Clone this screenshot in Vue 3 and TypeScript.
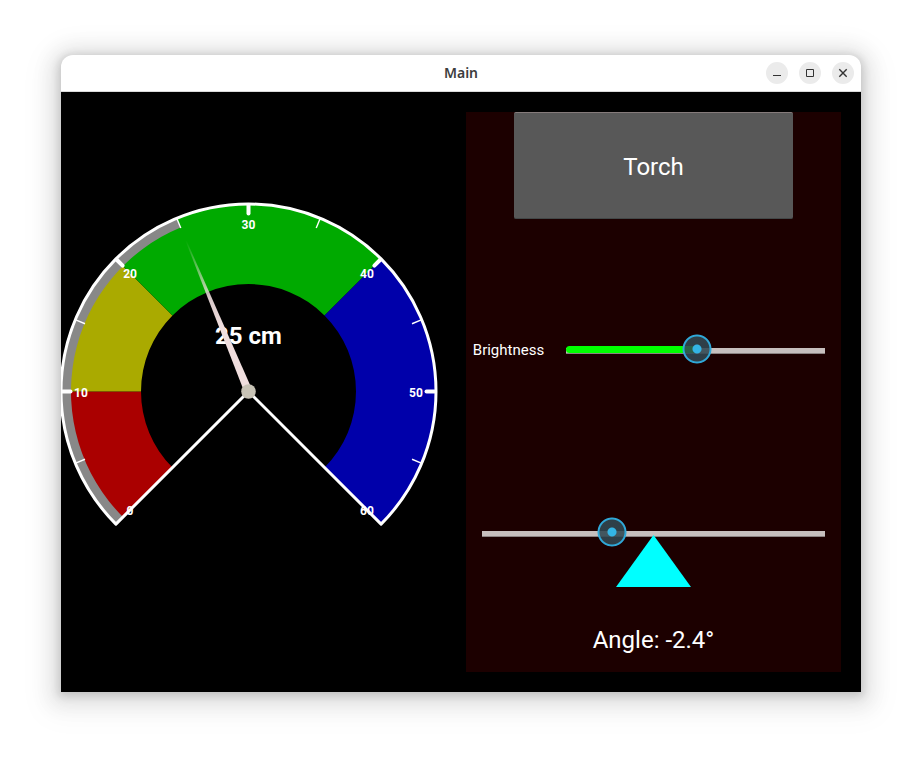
<script setup lang="ts">
import { computed, ref } from 'vue'

interface Zone {
  from: number
  to: number
  color: string
}

const CENTER = 187.5
const RIM = 187.5
const INNER = 107.5
const MAX = 60

const distance = ref(25)
const brightness = ref(50.6)
const angle = ref(-2.4)
const torchOn = ref(false)

const zones: Zone[] = [
  { from: 0, to: 10, color: '#aa0000' },
  { from: 10, to: 20, color: '#aaaa00' },
  { from: 20, to: 40, color: '#00aa00' },
  { from: 40, to: 60, color: '#0000aa' },
]

// Dial angle in degrees, measured clockwise from straight up.
const toDegrees = (value: number): number => (value / MAX) * 270 - 135

function point(value: number, radius: number): string {
  const rad = (toDegrees(value) * Math.PI) / 180
  return `${(CENTER + radius * Math.sin(rad)).toFixed(2)} ${(CENTER - radius * Math.cos(rad)).toFixed(2)}`
}

function band(from: number, to: number, inner: number, outer: number): string {
  const large = toDegrees(to) - toDegrees(from) > 180 ? 1 : 0
  return [
    `M${point(from, outer)}`,
    `A${outer} ${outer} 0 ${large} 1 ${point(to, outer)}`,
    `L${point(to, inner)}`,
    `A${inner} ${inner} 0 ${large} 0 ${point(from, inner)}Z`,
  ].join('')
}

const outline = `M${point(0, RIM)}A${RIM} ${RIM} 0 1 1 ${point(MAX, RIM)}L${CENTER} ${CENTER}Z`

const majors = [0, 10, 20, 30, 40, 50, 60].map((value) => {
  const [x, y] = point(value, 167.5).split(' ').map(Number)
  return { value, x, y: y + 5, path: `M${point(value, 186)}L${point(value, 178)}` }
})

const minors = [5, 15, 25, 35, 45, 55].map((value) => `M${point(value, 187)}L${point(value, 177)}`)

const needleTurn = computed(() => `rotate(${toDegrees(distance.value)} ${CENTER} ${CENTER})`)
const angleText = computed(() => `Angle: ${Number(angle.value).toFixed(1)}°`)
</script>

<template>
  <div class="desktop">
    <main class="window">
      <header class="titlebar">
        <span class="title">Main</span>
        <div class="controls">
          <button type="button" class="control" aria-label="Minimize">
            <svg viewBox="0 0 22 22" aria-hidden="true"><path d="M7 13.5h8" /></svg>
          </button>
          <button type="button" class="control" aria-label="Maximize">
            <svg viewBox="0 0 22 22" aria-hidden="true"><path d="M7.5 7.5h7v7h-7z" /></svg>
          </button>
          <button type="button" class="control" aria-label="Close">
            <svg viewBox="0 0 22 22" aria-hidden="true">
              <path class="cross" d="M7.3 7.3l7.4 7.4M14.7 7.3l-7.4 7.4" />
            </svg>
          </button>
        </div>
      </header>

      <div class="content">
        <svg class="gauge" viewBox="0 0 375 376" role="img" aria-label="Distance gauge">
          <defs>
            <linearGradient id="needle-fade" gradientUnits="userSpaceOnUse" x1="0" y1="24" x2="0" y2="180">
              <stop offset="0" stop-color="#f0dede" stop-opacity="0" />
              <stop offset="0.4" stop-color="#f0dede" stop-opacity="0.9" />
              <stop offset="0.6" stop-color="#f0dede" />
            </linearGradient>
          </defs>
          <path v-for="zone in zones" :key="zone.from" :d="band(zone.from, zone.to, INNER, RIM)" :fill="zone.color" />
          <path :d="band(0, distance, 177.5, RIM)" fill="#888888" />
          <g class="labels">
            <text v-for="tick in majors" :key="tick.value" :x="tick.x" :y="tick.y">{{ tick.value }}</text>
          </g>
          <path v-for="path in minors" :key="path" :d="path" class="minor" />
          <path v-for="tick in majors.slice(1, -1)" :key="tick.value" :d="tick.path" class="major" />
          <path :d="outline" class="outline" />
          <text class="reading" x="187.5" y="140">{{ distance }} cm</text>
          <path
            d="M187 24h1L191.5 184h-8z"
            fill="url(#needle-fade)"
            :transform="needleTurn"
          />
          <circle cx="187.5" cy="187.5" r="7.3" fill="#c8c3b6" />
        </svg>

        <section class="panel">
          <button type="button" class="torch" :aria-pressed="torchOn" @click="torchOn = !torchOn">Torch</button>

          <div class="brightness">
            <label for="brightness">Brightness</label>
            <div class="slider">
              <div class="groove"></div>
              <div class="rail"><div class="fill" :style="{ width: brightness + '%' }"></div></div>
              <input id="brightness" v-model.number="brightness" type="range" min="0" max="100" step="0.1" />
            </div>
          </div>

          <div class="tilt">
            <div class="slider">
              <div class="groove"></div>
              <input v-model.number="angle" type="range" min="-10" max="10" step="0.1" aria-label="Angle" />
            </div>
            <svg class="pivot" viewBox="0 0 75 52" aria-hidden="true"><path d="M37.5 0L75 52H0z" /></svg>
          </div>

          <output class="angle">{{ angleText }}</output>
        </section>
      </div>
    </main>
  </div>
</template>

<style>
body {
  background: #ffffff;
}
</style>

<style scoped>
.desktop {
  box-sizing: border-box;
  display: flex;
  min-height: 100vh;
  padding: 55px 61px 67px;
  font-family: Roboto, "Liberation Sans", sans-serif;
}

.window {
  display: flex;
  flex: 1;
  flex-direction: column;
  min-width: 0;
  overflow: hidden;
  border-radius: 12px 12px 0 0;
  background: #ffffff;
  box-shadow:
    0 2px 8px 2px rgba(0, 0, 0, 0.14),
    0 3px 20px 10px rgba(0, 0, 0, 0.09),
    0 6px 32px 16px rgba(0, 0, 0, 0.04);
}

.titlebar {
  display: grid;
  grid-template-columns: 1fr auto 1fr;
  align-items: center;
  height: 36px;
  padding: 0 7px;
  border-bottom: 1px solid #dadada;
}

.title {
  grid-column: 2;
  color: #3d3d3d;
  font-family: "Noto Sans", "Open Sans", sans-serif;
  font-size: 14px;
  font-weight: 600;
  line-height: 20px;
}

.controls {
  display: flex;
  gap: 11px;
  justify-content: flex-end;
}

.control {
  width: 22px;
  height: 22px;
  padding: 0;
  border: 0;
  border-radius: 50%;
  background: #ebebeb;
}

.control svg {
  display: block;
  width: 22px;
  height: 22px;
  fill: none;
  stroke: #333333;
  stroke-width: 1;
}

.control .cross {
  stroke-width: 1.4;
}

.content {
  display: grid;
  flex: 1;
  grid-template-columns: 1fr 1fr;
  gap: 30px;
  padding: 20px 20px 20px 0;
  background: #000000;
}

.gauge {
  align-self: center;
  width: 100%;
  overflow: visible;
}

.labels {
  fill: #ffffff;
  font-size: 12px;
  font-weight: 700;
  text-anchor: middle;
}

.minor {
  stroke: #ffffff;
  stroke-width: 1.4;
}

.major {
  stroke: #ffffff;
  stroke-width: 4;
  stroke-linecap: round;
}

.outline {
  fill: none;
  stroke: #ffffff;
  stroke-width: 3;
  stroke-linejoin: round;
}

.reading {
  fill: #ffffff;
  font-size: 24px;
  font-weight: 700;
  text-anchor: middle;
}

.panel {
  display: grid;
  grid-template-rows: 107fr 260fr 129fr 64fr;
  background: #1c0000;
  color: #ffffff;
}

.torch {
  margin: 0 48px;
  padding: 2px 0 0;
  border: 0;
  border-top: 1px solid #857b7b;
  border-bottom: 1px solid #424747;
  border-radius: 2px;
  background: #585858;
  color: #ffffff;
  font-family: inherit;
  font-size: 24px;
  line-height: 28px;
}

.brightness {
  display: grid;
  grid-template-columns: 85px 1fr;
  align-items: center;
  padding-right: 1px;
}

.brightness label {
  padding-top: 2px;
  font-size: 15px;
  line-height: 20px;
  text-align: center;
}

.slider {
  display: grid;
  grid-template-columns: 1fr;
  align-items: center;
  height: 30px;
}

.slider > * {
  grid-area: 1 / 1;
}

.groove {
  box-sizing: border-box;
  height: 6px;
  margin: 3px 15px 0;
  border-bottom: 1px solid #8a8282;
  background: #c6bfbe;
}

.rail {
  margin: 0 15px;
}

.fill {
  height: 7px;
  border-radius: 4px 0 0 4px;
  background: #00ff00;
}

.slider input {
  width: 100%;
  height: 30px;
  margin: 0;
  appearance: none;
  background: transparent;
}

.slider input::-webkit-slider-runnable-track {
  height: 30px;
  background: transparent;
}

.slider input::-webkit-slider-thumb {
  width: 30px;
  height: 30px;
  appearance: none;
  border: 0;
  border-radius: 50%;
  background: radial-gradient(
    circle closest-side,
    #33b5e5 4px,
    rgba(49, 72, 82, 0.88) 5px,
    rgba(49, 72, 82, 0.88) 12px,
    #2fa8d8 13px,
    #2fa8d8 14px,
    rgba(47, 168, 216, 0) 15px
  );
}

.tilt {
  display: flex;
  flex-direction: column;
  align-items: center;
  justify-content: center;
  padding: 17px 1px 0;
}

.tilt .slider {
  width: 100%;
}

.pivot {
  position: relative;
  width: 75px;
  height: 52px;
  margin-top: -12px;
  fill: #00ffff;
  pointer-events: none;
}

.angle {
  align-self: center;
  font-size: 24px;
  line-height: 28px;
  text-align: center;
}
</style>
